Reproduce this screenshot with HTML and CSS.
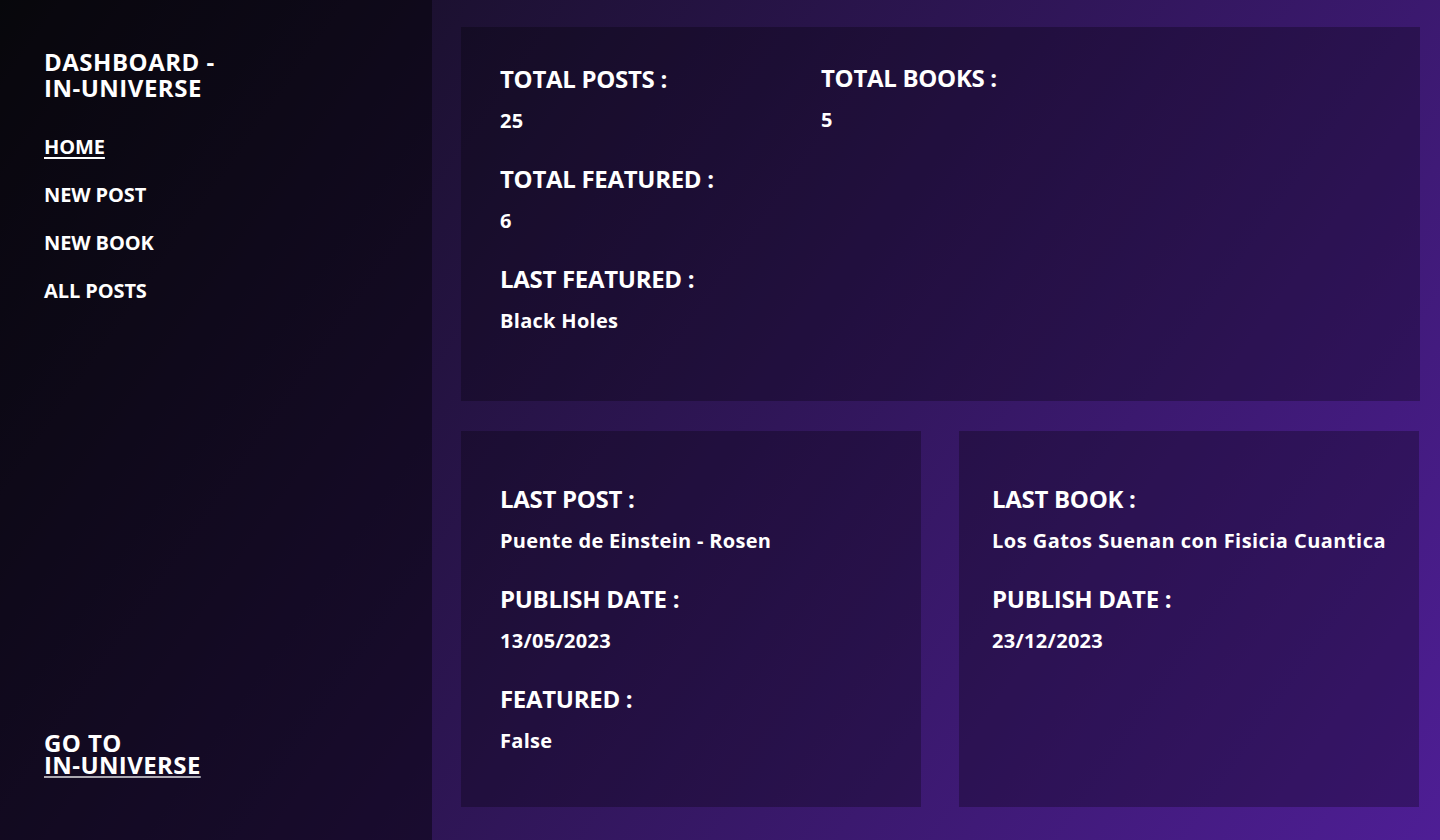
FILE: index.html
```html
<!DOCTYPE html>
<html lang="es">
<head>
<meta charset="utf-8">
<title>Dashboard - In-Universe</title>
<link rel="stylesheet" href="styles.css">
</head>
<body>
<div class="app">
  <aside class="sidebar">
    <div class="sidebar-top">
      <h1 class="brand">DASHBOARD -<br>IN-UNIVERSE</h1>
      <nav class="nav">
        <a class="nav-link active" href="#">HOME</a>
        <a class="nav-link" href="#">NEW POST</a>
        <a class="nav-link" href="#">NEW BOOK</a>
        <a class="nav-link" href="#">ALL POSTS</a>
      </nav>
    </div>
    <div class="goto">GO TO<br><a class="goto-link" href="#">IN-UNIVERSE</a></div>
  </aside>
  <main class="main">
    <section class="card card-summary">
      <div class="summary-grid">
        <div class="stat">
          <h2 class="stat-label">TOTAL POSTS :</h2>
          <p class="stat-value">25</p>
        </div>
        <div class="stat stat-books">
          <h2 class="stat-label">TOTAL BOOKS :</h2>
          <p class="stat-value">5</p>
        </div>
        <div class="stat">
          <h2 class="stat-label">TOTAL FEATURED :</h2>
          <p class="stat-value">6</p>
        </div>
        <div class="stat stat-empty"></div>
        <div class="stat">
          <h2 class="stat-label">LAST FEATURED :</h2>
          <p class="stat-value">Black Holes</p>
        </div>
      </div>
    </section>
    <section class="card card-detail">
      <div class="detail-body">
        <div class="stat">
          <h2 class="stat-label">LAST POST :</h2>
          <p class="stat-value">Puente de Einstein - Rosen</p>
        </div>
        <div class="stat">
          <h2 class="stat-label">PUBLISH DATE :</h2>
          <p class="stat-value">13/05/2023</p>
        </div>
        <div class="stat">
          <h2 class="stat-label">FEATURED :</h2>
          <p class="stat-value">False</p>
        </div>
      </div>
    </section>
    <section class="card card-detail">
      <div class="detail-body">
        <div class="stat">
          <h2 class="stat-label">LAST BOOK :</h2>
          <p class="stat-value stat-value-long">Los Gatos Suenan con Fisicia Cuantica</p>
        </div>
        <div class="stat">
          <h2 class="stat-label">PUBLISH DATE :</h2>
          <p class="stat-value">23/12/2023</p>
        </div>
      </div>
    </section>
  </main>
</div>
</body>
</html>
```
FILE: styles.css
```css
* { box-sizing: border-box; }

html, body {
  margin: 0;
  padding: 0;
  height: 100%;
}

body {
  font-family: "Open Sans", "Noto Sans", sans-serif;
  color: #ffffff;
  background: linear-gradient(125deg, #0e0d15 0%, #4e1e95 100%);
  overflow: hidden;
}

.app {
  display: flex;
  height: 840px;
}

/* Sidebar */
.sidebar {
  width: 432px;
  flex: 0 0 432px;
  background: rgba(0, 0, 0, 0.44);
  padding: 49px 44px 64px 44px;
  display: flex;
  flex-direction: column;
  justify-content: space-between;
}

.brand {
  margin: 0;
  font-size: 24px;
  line-height: 26px;
  font-weight: 700;
  letter-spacing: 0.5px;
}

.nav {
  display: flex;
  flex-direction: column;
  align-items: flex-start;
  gap: 24px;
  margin-top: 34px;
}

.nav-link {
  color: #ffffff;
  text-decoration: none;
  font-size: 20px;
  line-height: 24px;
  font-weight: 700;
  letter-spacing: -0.1px;
}

.nav-link.active {
  text-decoration: underline;
  text-decoration-thickness: 2px;
  text-underline-offset: 3px;
}

.goto {
  font-size: 24px;
  line-height: 22px;
  font-weight: 700;
  letter-spacing: 0.4px;
}

.goto-link {
  color: #ffffff;
  text-decoration: underline;
  text-decoration-color: rgba(255, 255, 255, 0.65);
  text-decoration-thickness: 2px;
  text-underline-offset: 2px;
}

/* Main */
.main {
  flex: 1;
  padding: 27px 21px 33px 29px;
  display: grid;
  grid-template-columns: 460px 460px;
  grid-template-rows: 374px 376px;
  column-gap: 38px;
  row-gap: 30px;
}

.card {
  background: rgba(0, 0, 0, 0.28);
}

.card-summary {
  grid-column: 1 / 3;
  margin-right: -1px;
  padding: 37px 39px;
}

.summary-grid {
  display: grid;
  grid-template-columns: 321px 1fr;
}

.stat-books {
  margin-top: -1px;
}

.card-detail {
  display: flex;
  justify-content: center;
  align-items: flex-start;
  padding: 53px 20px 0 20px;
}

.detail-body {
  min-width: 382px;
}

.stat {
  height: 100px;
}

.stat-label {
  margin: 0 0 12px 0;
  font-size: 24px;
  line-height: 30px;
  font-weight: 700;
  letter-spacing: -0.3px;
}

.stat-value {
  margin: 0;
  font-size: 20px;
  line-height: 30px;
  font-weight: 700;
  letter-spacing: 0.3px;
}

.stat-value-long {
  letter-spacing: 0.45px;
}
```
